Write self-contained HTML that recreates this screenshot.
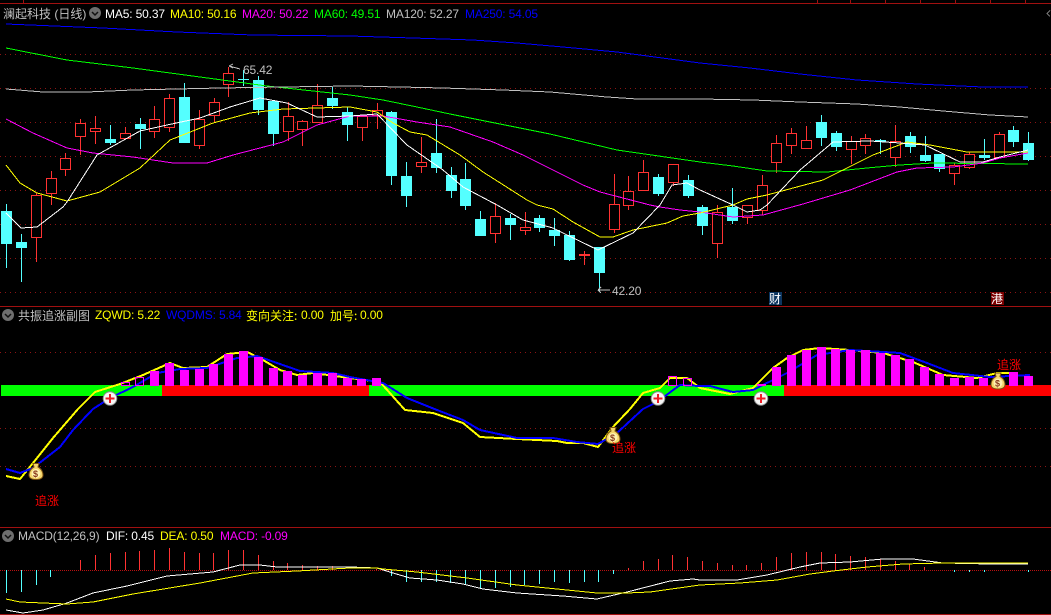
<!DOCTYPE html>
<html lang="zh">
<head>
<meta charset="utf-8">
<title>澜起科技</title>
<style>
html,body{margin:0;padding:0;background:#000;width:1051px;height:615px;overflow:hidden}
svg{display:block}
text{font-family:"Liberation Sans","WenQuanYi Zen Hei","Noto Sans CJK SC",sans-serif;font-size:12px}
.lat{letter-spacing:-.15px}
.cn{font-family:"WenQuanYi Zen Hei","Noto Sans CJK SC",sans-serif}
</style>
</head>
<body>
<svg width="1051" height="615" viewBox="0 0 1051 615" xmlns="http://www.w3.org/2000/svg">
<rect width="1051" height="615" fill="#000"/>
<!-- grid -->
<g stroke="#8c1414" stroke-width="1" stroke-dasharray="1 4" shape-rendering="crispEdges">
<path d="M0 54.500H1051M0 88.500H1051M0 122.500H1051M0 156.500H1051M0 190.500H1051M0 224.500H1051M0 258.500H1051M0 292.500H1051M0 352.500H1051M0 428.500H1051M0 466.500H1051"/>
</g>
<path d="M0 570.500H1051" stroke="#b81010" stroke-dasharray="1 1" shape-rendering="crispEdges"/>
<g stroke="#a01010" stroke-width="1" shape-rendering="crispEdges">
<path d="M0 3.500H1051M0 306.500H1051M0 527.500H1051M0 614.500H1051"/>
<path d="M23.500 0V3M817.500 0V3M850.500 0V3M885.500 0V3M920.500 0V3M955.500 0V3M990.500 0V3M1025.500 0V3"/>
</g>
<!-- candle wicks -->
<g shape-rendering="crispEdges" stroke-width="1">
<path stroke="#54ffff" d="M6.500 204V268M21.500 234V282M110.500 125V145M140.500 118V149M184.500 83V143M243.500 70V86M258.500 76V115M273.500 101V146M332.500 87V109M347.500 107V141M391.500 111V185M406.500 162V207M436.500 119V173M451.500 167V198M465.500 163V210M480.500 211V236M510.500 214V240M539.500 215V232M554.500 218V246M569.500 231V261M599.500 247V291M658.500 174V196M688.500 175V198M702.500 205V235M732.500 188V224M821.500 115V146M836.500 131V151M880.500 139V154M910.500 132V153M925.500 136V162M939.500 154V172M984.500 139V160M1013.500 126V147M1028.500 132V161"/>
<path stroke="#ff3232" d="M36.500 193V262M51.500 171V205M65.500 153V176M80.500 119V155M95.500 116V144M125.500 127V138M154.500 106V138M169.500 94V132M199.500 110V149M214.500 98V123M228.500 67V97M288.500 102V141M302.500 120V146M317.500 84V122M362.500 116V141M377.500 103V129M421.500 137V173M495.500 203V243M525.500 212V235M584.500 251V265M614.500 174V233M628.500 176V210M643.500 160V190M673.500 164V186M717.500 205V258M747.500 205V224M762.500 175V215M776.500 135V173M791.500 128V154M806.500 126V148M851.500 136V164M865.500 134V154M895.500 125V167M954.500 163V185M969.500 152V169M999.500 132V157"/>
</g>
<!-- cyan bodies -->
<g fill="#54ffff" shape-rendering="crispEdges">
<rect x="1" y="211" width="11" height="33"/><rect x="16" y="242" width="11" height="6"/><rect x="105" y="139" width="11" height="4"/><rect x="135" y="124" width="11" height="5"/><rect x="179" y="97" width="11" height="46"/><rect x="238" y="79" width="11" height="1"/><rect x="253" y="80" width="11" height="30"/><rect x="268" y="101" width="11" height="33"/><rect x="327" y="98" width="11" height="8"/><rect x="342" y="112" width="11" height="13"/><rect x="386" y="112" width="11" height="64"/><rect x="401" y="176" width="11" height="20"/><rect x="431" y="153" width="11" height="15"/><rect x="446" y="175" width="11" height="16"/><rect x="460" y="179" width="11" height="27"/><rect x="475" y="219" width="11" height="17"/><rect x="505" y="218" width="11" height="7"/><rect x="534" y="218" width="11" height="10"/><rect x="549" y="230" width="11" height="6"/><rect x="564" y="235" width="11" height="25"/><rect x="594" y="247" width="11" height="26"/><rect x="653" y="177" width="11" height="17"/><rect x="683" y="180" width="11" height="16"/><rect x="697" y="207" width="11" height="19"/><rect x="727" y="207" width="11" height="14"/><rect x="816" y="122" width="11" height="16"/><rect x="831" y="133" width="11" height="14"/><rect x="875" y="140" width="11" height="2"/><rect x="905" y="136" width="11" height="11"/><rect x="920" y="155" width="11" height="6"/><rect x="934" y="154" width="11" height="15"/><rect x="979" y="155" width="11" height="3"/><rect x="1008" y="130" width="11" height="12"/><rect x="1023" y="143" width="11" height="17"/>
</g>
<!-- red bodies -->
<g fill="#000" stroke="#ff3232" stroke-width="1" shape-rendering="crispEdges">
<rect x="31.500" y="195.500" width="10" height="42"/><rect x="46.500" y="178.500" width="10" height="15"/><rect x="60.500" y="158.500" width="10" height="11"/><rect x="75.500" y="123.500" width="10" height="13"/><rect x="90.500" y="128.500" width="10" height="3"/><rect x="120.500" y="133.500" width="10" height="5"/><rect x="149.500" y="119.500" width="10" height="12"/><rect x="164.500" y="98.500" width="10" height="29"/><rect x="194.500" y="119.500" width="10" height="26"/><rect x="209.500" y="102.500" width="10" height="13"/><rect x="223.500" y="73.500" width="10" height="11"/><rect x="283.500" y="116.500" width="10" height="15"/><rect x="297.500" y="121.500" width="10" height="8"/><rect x="312.500" y="105.500" width="10" height="17"/><rect x="357.500" y="116.500" width="10" height="11"/><rect x="372.500" y="110.500" width="10" height="5"/><rect x="416.500" y="162.500" width="10" height="4"/><rect x="490.500" y="216.500" width="10" height="17"/><rect x="520.500" y="227.500" width="10" height="3"/><rect x="579.500" y="254.500" width="10" height="1" fill="#ff3232"/><rect x="609.500" y="204.500" width="10" height="25"/><rect x="623.500" y="191.500" width="10" height="14"/><rect x="638.500" y="172.500" width="10" height="18"/><rect x="668.500" y="164.500" width="10" height="18"/><rect x="712.500" y="212.500" width="10" height="31"/><rect x="742.500" y="205.500" width="10" height="12"/><rect x="757.500" y="185.500" width="10" height="25"/><rect x="771.500" y="143.500" width="10" height="19"/><rect x="786.500" y="133.500" width="10" height="12"/><rect x="801.500" y="140.500" width="10" height="8"/><rect x="846.500" y="141.500" width="10" height="8"/><rect x="860.500" y="138.500" width="10" height="7"/><rect x="890.500" y="141.500" width="10" height="16"/><rect x="949.500" y="165.500" width="10" height="8"/><rect x="964.500" y="154.500" width="10" height="13"/><rect x="994.500" y="134.500" width="10" height="23"/>
</g>
<!-- moving averages -->
<g fill="none" stroke-width="1" shape-rendering="crispEdges">
<polyline stroke="#0000ff" points="6,24 103,28 177,32 253,35 350,36 413,38 473,40 517,43 563,47 617,52 700,63 750,68 800,74 857,80 917,84 983,87 1028,87"/>
<polyline stroke="#00ff00" points="6,48 67,60 133,68 200,77 267,86 350,95 383,100 417,107 450,114 500,124 550,134 617,150 700,162 733,166 767,171 827,172 867,168 900,165 933,163 1028,164"/>
<polyline stroke="#c0c0c0" points="6,89 43,92 87,92 133,90 220,88 283,87 350,86 400,87 443,88 503,90 550,92 607,97 637,99 700,99 753,100 800,102 857,104 900,107 943,111 990,115 1028,117"/>
<polyline stroke="#ff00ff" points="6,119 33,133 67,148 93,153 133,157 173,163 207,163 233,155 283,142 317,125 350,116 383,116 417,122 450,127 493,142 523,155 557,172 583,185 600,192 650,205 660,207 680,210 700,212 733,217 763,215 803,204 850,190 897,172 917,168 953,167 983,163 1000,158 1028,153"/>
<polyline stroke="#ffff00" points="6,165 20,183 37,193 67,201 100,192 140,168 170,140 213,123 250,113 283,109 350,107 377,112 393,123 410,132 427,135 460,155 483,172 527,200 537,205 553,209 573,222 600,237 613,237 633,230 667,223 683,216 700,213 733,205 747,199 767,195 823,180 843,170 873,155 907,142 930,145 967,152 1028,152"/>
<polyline stroke="#ffffff" points="6,213 21,228 37,227 63,207 67,202 97,155 140,131 167,125 200,118 230,107 260,98 287,103 317,117 350,116 377,114 407,145 443,170 463,187 497,205 523,220 553,228 563,233 598,250 633,233 660,205 672,185 687,183 700,190 733,205 747,212 760,210 767,205 800,170 833,142 870,141 900,143 925,145 960,162 983,162 1000,157 1028,150"/>
</g>
<!-- extreme labels -->
<g fill="none" stroke="#c0c0c0" shape-rendering="crispEdges">
<path d="M229 66L240 69M229 66L233 64M229 66L233 68"/>
<path d="M598 290H610M598 290L601 287M598 290L601 293"/>
</g>
<text class="lat" x="243" y="74" fill="#c0c0c0">65.42</text>
<text class="lat" x="612" y="295" fill="#c0c0c0">42.20</text>
<!-- event boxes -->
<rect x="769" y="292" width="13" height="13" fill="#0c3560"/>
<text class="cn" x="769" y="303" fill="#fff">财</text>
<rect x="991" y="292" width="13" height="13" fill="#7c0000"/>
<text class="cn" x="991" y="303" fill="#fff">港</text>
<!-- sub panel bands -->
<g shape-rendering="crispEdges">
<rect x="1" y="385" width="161" height="11" fill="#00ff00"/>
<rect x="162" y="385" width="207" height="11" fill="#ff0000"/>
<rect x="369" y="385" width="415" height="11" fill="#00ff00"/>
<rect x="784" y="385" width="267" height="11" fill="#ff0000"/>
</g>
<!-- sub panel lines under bars -->
<g fill="none" stroke-width="2" shape-rendering="crispEdges">
<polyline stroke="#ffff00" points="6,476 20,479 33,463 53,438 78,409 95,392 120,384 143,375 170,363 183,368 207,367 227,354 247,352 263,360 280,370 297,375 313,373 350,378 380,382 405,410 433,413 463,423 480,437 517,439 557,441 567,443 583,443 598,447 613,427 630,409 643,393 660,388 670,378 687,378 700,388 730,394 753,388 773,368 787,358 803,350 820,348 850,350 883,353 913,362 943,375 977,378 997,373 1010,373"/>
<polyline stroke="#0000ff" points="6,469 20,473 33,468 60,447 73,430 93,409 110,398 133,387 157,373 180,369 207,368 237,358 257,356 277,363 300,371 333,373 350,377 383,383 407,398 437,410 463,420 480,430 517,438 553,438 577,442 598,444 617,433 643,409 657,402 680,385 700,386 710,386 733,392 753,390 763,385 787,373 817,355 850,350 900,353 927,363 953,373 990,377 1030,375"/>
</g>
<!-- sub panel bars -->
<g fill="#ff00ff" shape-rendering="crispEdges">
<rect x="150" y="371" width="9" height="15"/><rect x="165" y="363" width="9" height="23"/><rect x="180" y="370" width="9" height="16"/><rect x="195" y="369" width="9" height="17"/><rect x="209" y="364" width="9" height="22"/><rect x="224" y="354" width="9" height="32"/><rect x="239" y="351" width="9" height="35"/><rect x="254" y="357" width="9" height="29"/><rect x="269" y="368" width="9" height="18"/><rect x="283" y="371" width="9" height="15"/><rect x="298" y="375" width="9" height="11"/><rect x="313" y="373" width="9" height="13"/><rect x="328" y="373" width="9" height="13"/><rect x="343" y="378" width="9" height="8"/><rect x="357" y="379" width="9" height="7"/><rect x="372" y="378" width="9" height="8"/><rect x="757" y="384" width="9" height="2"/><rect x="772" y="367" width="9" height="19"/><rect x="787" y="355" width="9" height="31"/><rect x="802" y="350" width="9" height="36"/><rect x="817" y="347" width="9" height="39"/><rect x="831" y="349" width="9" height="37"/><rect x="846" y="350" width="9" height="36"/><rect x="861" y="350" width="9" height="36"/><rect x="876" y="353" width="9" height="33"/><rect x="891" y="355" width="9" height="31"/><rect x="905" y="359" width="9" height="27"/><rect x="920" y="367" width="9" height="19"/><rect x="935" y="374" width="9" height="12"/><rect x="950" y="378" width="9" height="8"/><rect x="965" y="377" width="9" height="9"/><rect x="979" y="378" width="9" height="8"/><rect x="1009" y="372" width="9" height="14"/><rect x="1024" y="376" width="9" height="10"/>
</g>
<g fill="none" stroke="#ff00ff" shape-rendering="crispEdges">
<rect x="121.500" y="382.500" width="8" height="3"/><rect x="135.500" y="377.500" width="8" height="8"/><rect x="668.500" y="376.500" width="8" height="9"/><rect x="683.500" y="378.500" width="8" height="7"/>
</g>
<!-- plus markers -->
<g>
<g transform="translate(110,398.500)"><circle r="6.800" fill="#f6f6f6" stroke="#8a8a8a" stroke-width="1"/><path d="M-4.500 0H4.500M0-4.500V4.500" stroke="#ee1c25" stroke-width="2"/></g>
<g transform="translate(658,398.500)"><circle r="6.800" fill="#f6f6f6" stroke="#8a8a8a" stroke-width="1"/><path d="M-4.500 0H4.500M0-4.500V4.500" stroke="#ee1c25" stroke-width="2"/></g>
<g transform="translate(761,398.500)"><circle r="6.800" fill="#f6f6f6" stroke="#8a8a8a" stroke-width="1"/><path d="M-4.500 0H4.500M0-4.500V4.500" stroke="#ee1c25" stroke-width="2"/></g>
</g>
<!-- money bags -->
<g>
<g transform="translate(36,472)"><path d="M-3-8.500H3L2-5C6-3 7 1 7 3C7 6.500 4 7.500 0 7.500C-4 7.500-7 6.500-7 3C-7 1-6-3-2-5Z" fill="#f4d56a" stroke="#7a4e10" stroke-width="1"/><circle cy="1.500" r="4.500" fill="#fff2b0"/><text x="-3" y="5" style="font-size:9px;font-weight:bold" fill="#8a3a1c">$</text></g>
<g transform="translate(613,436)"><path d="M-3-8.500H3L2-5C6-3 7 1 7 3C7 6.500 4 7.500 0 7.500C-4 7.500-7 6.500-7 3C-7 1-6-3-2-5Z" fill="#f4d56a" stroke="#7a4e10" stroke-width="1"/><circle cy="1.500" r="4.500" fill="#fff2b0"/><text x="-3" y="5" style="font-size:9px;font-weight:bold" fill="#8a3a1c">$</text></g>
<g transform="translate(998,381.500)"><path d="M-3-8.500H3L2-5C6-3 7 1 7 3C7 6.500 4 7.500 0 7.500C-4 7.500-7 6.500-7 3C-7 1-6-3-2-5Z" fill="#f4d56a" stroke="#7a4e10" stroke-width="1"/><circle cy="1.500" r="4.500" fill="#fff2b0"/><text x="-3" y="5" style="font-size:9px;font-weight:bold" fill="#8a3a1c">$</text></g>
</g>
<text class="cn" x="35" y="505" fill="#ff0000">追涨</text>
<text class="cn" x="612" y="452" fill="#ff0000">追涨</text>
<text class="cn" x="997" y="369" fill="#ff0000">追涨</text>
<!-- MACD bars -->
<g shape-rendering="crispEdges" stroke-width="1">
<path stroke="#54ffff" d="M6.500 570V593M21.500 570V592M36.500 570V585M50.500 570V577M391.500 570V576M406.500 570V582M421.500 570V582M436.500 570V582M450.500 570V583M465.500 570V585M480.500 570V589M495.500 570V588M510.500 570V587M524.500 570V585M539.500 570V584M554.500 570V582M569.500 570V583M584.500 570V582M598.500 570V582M613.500 570V574M954.500 570V572M969.500 570V572M984.500 570V572M1028.500 570V572"/>
<path stroke="#ff3232" d="M80.500 560V570M95.500 555V570M110.500 553V570M125.500 552V570M139.500 551V570M154.500 550V570M169.500 548V570M184.500 552V570M199.500 553V570M213.500 553V570M228.500 550V570M243.500 550V570M258.500 555V570M273.500 561V570M287.500 563V570M302.500 565V570M317.500 566V570M332.500 566V570M376.500 569V570M628.500 568V570M643.500 561V570M658.500 559V570M672.500 555V570M687.500 557V570M702.500 561V570M717.500 563V570M732.500 565V570M746.500 565V570M761.500 563V570M776.500 557V570M791.500 553V570M806.500 552V570M821.500 552V570M835.500 554V570M850.500 556V570M865.500 557V570M880.500 559V570M895.500 561V570M909.500 564V570M924.500 567V570"/>
</g>
<g fill="none" stroke-width="1" shape-rendering="crispEdges">
<polyline stroke="#ffffff" points="6,610 23,613 43,610 67,603 93,593 127,586 167,576 213,572 240,565 260,565 277,567 350,567 377,568 393,573 410,578 437,580 463,584 483,589 517,593 563,596 597,599 627,592 670,581 693,579 700,580 737,580 767,575 800,567 820,563 850,562 883,559 913,559 943,563 990,564 1028,564"/>
<polyline stroke="#ffff00" points="6,599 20,602 43,603 67,604 93,602 133,594 200,583 253,573 297,571 350,568 377,568 383,569 417,572 467,578 517,585 567,590 597,593 627,593 650,592 700,585 740,583 777,580 810,574 833,571 867,567 903,564 943,563 1028,563"/>
</g>
<!-- collapse icons -->
<g>
<circle cx="95" cy="13" r="6" fill="#6e6e6e"/><path d="M92 12L95 15L98 12" fill="none" stroke="#111" stroke-width="1.500"/>
<circle cx="8" cy="315" r="6" fill="#6e6e6e"/><path d="M5 314L8 317L11 314" fill="none" stroke="#111" stroke-width="1.500"/>
<circle cx="8" cy="536" r="6" fill="#6e6e6e"/><path d="M5 535L8 538L11 535" fill="none" stroke="#111" stroke-width="1.500"/>
</g>
<path d="M1050 10.500L1047 13.500L1050 16.500" fill="none" stroke="#777" shape-rendering="crispEdges"/>
<!-- header 1 -->
<text x="3" y="18" fill="#c0c0c0">澜起科技 (日线)</text>
<text class="lat" x="105" y="18" fill="#ffffff">MA5: 50.37</text>
<text class="lat" x="170" y="18" fill="#ffff00">MA10: 50.16</text>
<text class="lat" x="242" y="18" fill="#ff00ff">MA20: 50.22</text>
<text class="lat" x="314" y="18" fill="#00ff00">MA60: 49.51</text>
<text class="lat" x="386" y="18" fill="#c0c0c0">MA120: 52.27</text>
<text class="lat" x="465" y="18" fill="#0000ff">MA250: 54.05</text>
<!-- header 2 -->
<text class="cn" x="18" y="320" fill="#c0c0c0">共振追涨副图</text>
<text class="lat" x="95" y="319" fill="#ffff00">ZQWD: 5.22</text>
<text class="lat" x="166" y="319" fill="#0000ff">WQDMS: 5.84</text>
<text class="cn" x="246" y="320" fill="#ffff00">变向关注:</text>
<text class="lat" x="301" y="319" fill="#ffff00">0.00</text>
<text class="cn" x="330" y="320" fill="#ffff00">加号:</text>
<text class="lat" x="360" y="319" fill="#ffff00">0.00</text>
<!-- header 3 -->
<text class="lat" x="18" y="540" fill="#c0c0c0">MACD(12,26,9)</text>
<text class="lat" x="106" y="540" fill="#ffffff">DIF: 0.45</text>
<text class="lat" x="160" y="540" fill="#ffff00">DEA: 0.50</text>
<text class="lat" x="220" y="540" fill="#ff00ff">MACD: -0.09</text>
</svg>
</body>
</html>
